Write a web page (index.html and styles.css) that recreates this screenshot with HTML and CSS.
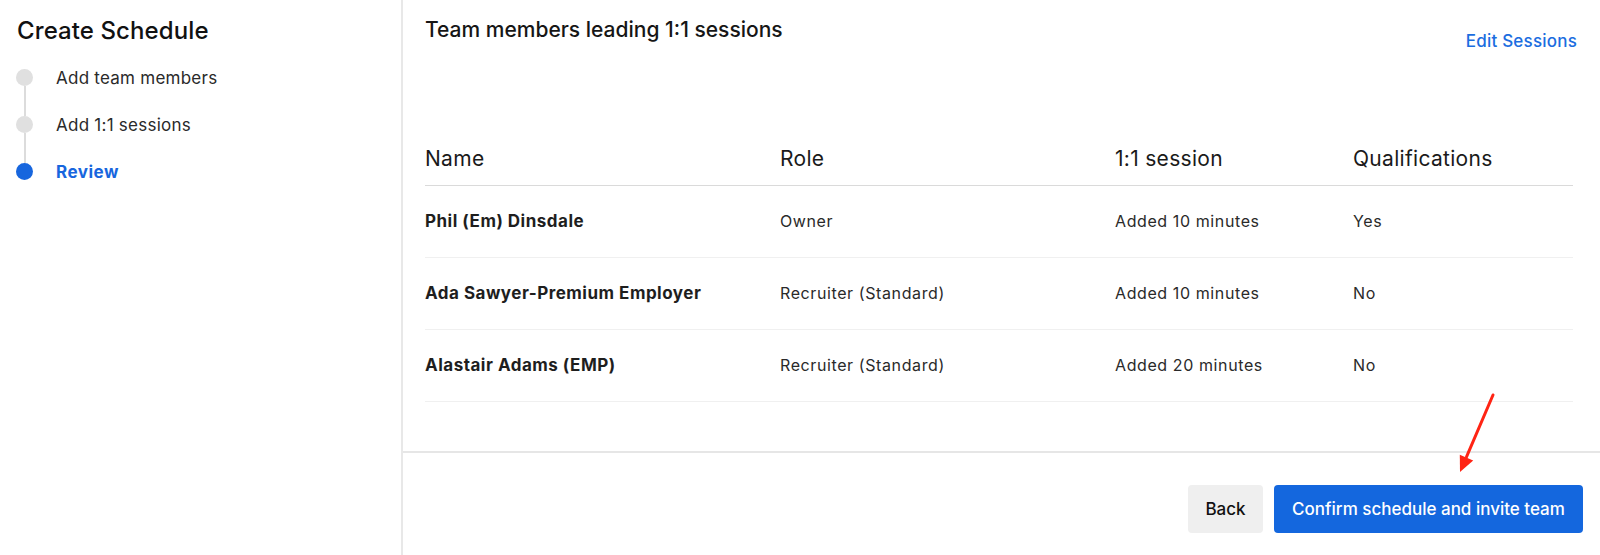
FILE: index.html
```html
<!DOCTYPE html>
<html lang="en">
<head>
<meta charset="utf-8">
<title>Create Schedule</title>
<link rel="stylesheet" href="styles.css">
</head>
<body>
<div class="app">
  <aside class="sidebar">
    <h1 class="sidebar-title">Create Schedule</h1>
    <ol class="steps">
      <li class="step step-first">
        <span class="marker"><span class="seg"></span><span class="dot"></span><span class="seg"></span></span>
        <span class="step-label">Add team members</span>
      </li>
      <li class="step">
        <span class="marker"><span class="seg"></span><span class="dot"></span><span class="seg"></span></span>
        <span class="step-label">Add 1:1 sessions</span>
      </li>
      <li class="step step-last step-active">
        <span class="marker"><span class="seg"></span><span class="dot"></span><span class="seg"></span></span>
        <span class="step-label">Review</span>
      </li>
    </ol>
  </aside>
  <main class="main">
    <section class="content">
      <div class="content-head">
        <h2 class="content-title">Team members leading 1:1 sessions</h2>
        <a class="edit-link" href="#">Edit Sessions</a>
      </div>
      <table class="team-table">
        <colgroup>
          <col class="col-name"><col class="col-role"><col class="col-session"><col>
        </colgroup>
        <thead>
          <tr><th>Name</th><th>Role</th><th>1:1 session</th><th>Qualifications</th></tr>
        </thead>
        <tbody>
          <tr><td class="name">Phil (Em) Dinsdale</td><td>Owner</td><td>Added 10 minutes</td><td>Yes</td></tr>
          <tr><td class="name">Ada Sawyer-Premium Employer</td><td>Recruiter (Standard)</td><td>Added 10 minutes</td><td>No</td></tr>
          <tr><td class="name">Alastair Adams (EMP)</td><td>Recruiter (Standard)</td><td>Added 20 minutes</td><td>No</td></tr>
        </tbody>
      </table>
    </section>
    <footer class="footer">
      <button class="btn btn-secondary" type="button">Back</button>
      <button class="btn btn-primary" type="button">Confirm schedule and invite team</button>
    </footer>
  </main>
</div>
<svg class="annotation-arrow" width="50" height="90" viewBox="0 0 50 90" aria-hidden="true">
  <line x1="43" y1="5" x2="16.5" y2="66.8" stroke="#ff2414" stroke-width="3" stroke-linecap="round"/>
  <polygon points="10,82 23.2,70.6 9.8,64.8" fill="#ff2414"/>
</svg>
</body>
</html>
```

FILE: styles.css
```css
* { box-sizing: border-box; }

html, body {
  margin: 0;
  padding: 0;
  background: #ffffff;
}

body {
  font-family: Inter, "Noto Sans", "Liberation Sans", sans-serif;
  color: #1c1c1c;
  position: relative;
}

.app {
  display: flex;
  min-height: 555px;
}

/* Sidebar */
.sidebar {
  width: 403px;
  flex: 0 0 403px;
  border-right: 2px solid #e8e8e8;
  padding: 15px 16px 0 17px;
}

.sidebar-title {
  margin: 0;
  font-size: 24px;
  line-height: 32px;
  font-weight: 500;
  color: #111111;
  letter-spacing: 0.1px;
}

.steps {
  list-style: none;
  margin: 7px 0 0 0;
  padding: 0;
}

.step {
  display: flex;
  align-items: stretch;
  height: 47px;
  margin-left: -1px;
}

.marker {
  width: 17px;
  flex: 0 0 17px;
  display: flex;
  flex-direction: column;
  align-items: center;
}

.seg {
  flex: 1;
  width: 2px;
  background: #dcdcdc;
}

.step-first .seg:first-child,
.step-last .seg:last-child {
  background: transparent;
}

.dot {
  width: 17px;
  height: 17px;
  border-radius: 50%;
  background: #e0e0e0;
  flex: 0 0 17px;
}

.step-label {
  display: flex;
  align-items: center;
  margin-left: 23px;
  font-size: 17px;
  letter-spacing: 0.25px;
  color: #2a2a2a;
}

.step-active .dot {
  background: #1766de;
}

.step-active .step-label {
  color: #1766de;
  font-weight: 700;
  letter-spacing: 0.5px;
}

/* Main */
.main {
  flex: 1;
  display: flex;
  flex-direction: column;
  min-width: 0;
}

.content {
  padding: 16px 27px 49px 22px;
}

.content-head {
  display: flex;
  justify-content: space-between;
  align-items: flex-start;
}

.content-title {
  margin: 0;
  font-size: 21px;
  line-height: 28px;
  font-weight: 500;
  color: #161616;
}

.edit-link {
  margin-top: 13px;
  margin-right: -4px;
  font-size: 17px;
  line-height: 24px;
  font-weight: 500;
  letter-spacing: 0.2px;
  color: #1b6de0;
  text-decoration: none;
}

.team-table {
  width: 100%;
  margin-top: 80px;
  border-collapse: collapse;
  table-layout: fixed;
}

.col-name { width: 355px; }
.col-role { width: 335px; }
.col-session { width: 238px; }

.team-table th {
  text-align: left;
  font-size: 21px;
  line-height: 28px;
  font-weight: 400;
  letter-spacing: 0.3px;
  color: #1a1a1a;
  padding: 12px 0 12px 0;
  border-bottom: 1px solid #dadada;
}

.team-table td {
  font-size: 16px;
  line-height: 24px;
  letter-spacing: 0.6px;
  color: #2a2a2a;
  padding: 23px 0 24px 0;
  border-bottom: 1px solid #f0f0f0;
  white-space: nowrap;
}

.team-table td.name {
  font-size: 17px;
  font-weight: 700;
  letter-spacing: 0.5px;
  color: #1e1e1e;
}

/* Footer */
.footer {
  border-top: 2px solid #e6e6e6;
  padding: 32px 17px 32px 0;
  display: flex;
  justify-content: flex-end;
  gap: 11px;
}

.btn {
  height: 48px;
  border: none;
  border-radius: 4px;
  font-family: Inter, "Noto Sans", "Liberation Sans", sans-serif;
  font-size: 17px;
  font-weight: 500;
  cursor: pointer;
}

.btn-secondary {
  width: 75px;
  padding: 0;
  background: #efefef;
  color: #111111;
}

.btn-primary {
  width: 309px;
  padding: 0;
  background: #1467de;
  color: #ffffff;
}

/* Annotation overlay */
.annotation-arrow {
  position: absolute;
  left: 1450px;
  top: 390px;
}
```
